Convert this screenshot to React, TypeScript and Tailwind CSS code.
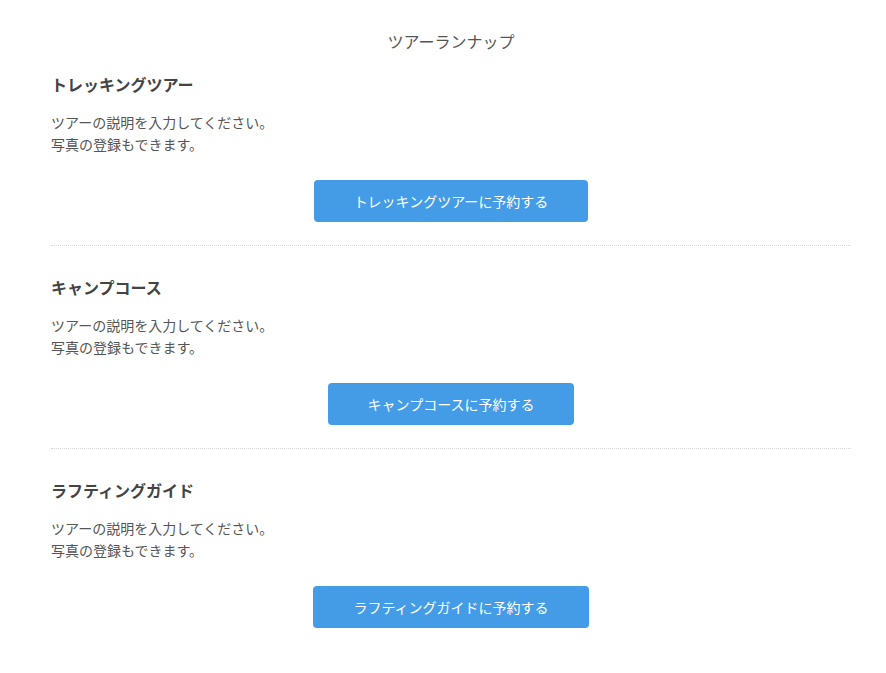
import React from "react";

const tours = [
  { name: "トレッキングツアー" },
  { name: "キャンプコース" },
  { name: "ラフティングガイド" },
];

export default function App() {
  return (
    <div
      className="min-h-[673px] bg-white text-[#555]"
      style={{ fontFamily: '"Noto Sans CJK JP", "Noto Sans", sans-serif' }}
    >
      <div className="ml-[51px] w-[800px] pt-[28px]">
        <h1 className="text-center text-[16px] leading-[26px] font-normal text-[#555]">
          ツアーランナップ
        </h1>
        <div className="mt-[17px]">
          {tours.map((t, i) => (
            <section
              key={t.name}
              className={
                i < tours.length - 1
                  ? "border-b border-dotted border-[#d4d4d4] pb-[23px] mb-[28px]"
                  : "pb-[23px]"
              }
            >
              <h2 className="text-[16px] leading-[26px] font-bold text-[#444]">
                {t.name}
              </h2>
              <p className="mt-[14px] text-[14px] leading-[22px] text-[#555]">
                ツアーの説明を入力してください。
                <br />
                写真の登録もできます。
              </p>
              <div className="mt-[25px] flex justify-center">
                <button className="h-[42px] px-[40px] rounded-[4px] bg-[#449ce6] text-white text-[14px]">
                  {t.name}に予約する
                </button>
              </div>
            </section>
          ))}
        </div>
      </div>
    </div>
  );
}
